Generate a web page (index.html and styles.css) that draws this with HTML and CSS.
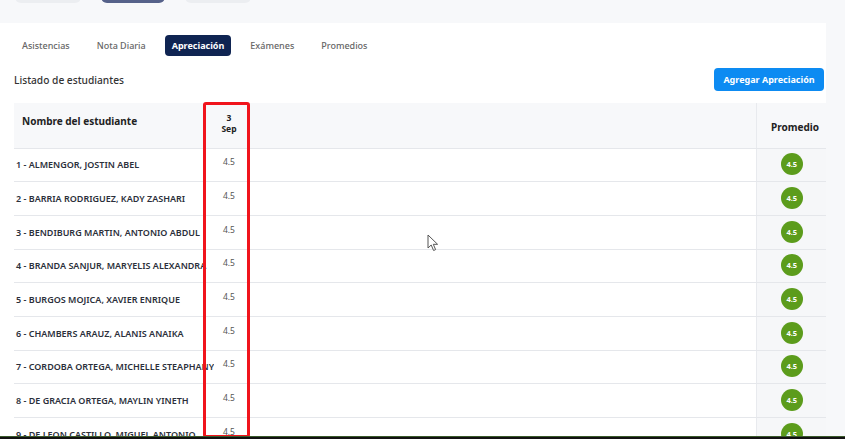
FILE: index.html
```html
<!DOCTYPE html>
<html lang="es">

<head>
    <meta charset="UTF-8">
    <meta name="viewport" content="width=device-width, initial-scale=1.0">
    <title>Apreciación</title>
    <link rel="stylesheet" href="styles.css">
</head>

<body>

    <div class="topbar">
        <span class="top-btn"></span>
        <span class="top-btn dark"></span>
        <span class="top-btn"></span>
    </div>

    <div class="card">
        <div class="tabs">
            <span class="tab">Asistencias</span>
            <span class="tab">Nota Diaria</span>
            <span class="tab active">Apreciación</span>
            <span class="tab">Exámenes</span>
            <span class="tab">Promedios</span>
        </div>

        <div class="list-head">
            <h3>Listado de estudiantes</h3>
            <button type="button">Agregar Apreciación</button>
        </div>

        <div class="table-wrap">
            <table class="grades">
                <thead>
                    <tr>
                        <th class="name-col">Nombre del estudiante</th>
                        <th class="date-col">3<br>Sep</th>
                        <th class="fill-col"></th>
                        <th class="avg-col">Promedio</th>
                    </tr>
                </thead>
                <tbody id="rows"></tbody>
            </table>
            <div class="highlight"></div>
            <svg class="cursor" width="12" height="18" viewBox="0 0 12 18">
                <path d="M1 1 L1 14 L4.2 11 L6.6 16.5 L8.6 15.6 L6.3 10.3 L10.6 10.3 Z" fill="#fff" stroke="#555" stroke-width="1" />
            </svg>
        </div>
    </div>

    <div class="bottom-bar"></div>

    <script>
        var students = [
            "ALMENGOR, JOSTIN ABEL",
            "BARRIA RODRIGUEZ, KADY ZASHARI",
            "BENDIBURG MARTIN, ANTONIO ABDUL",
            "BRANDA SANJUR, MARYELIS ALEXANDRA",
            "BURGOS MOJICA, XAVIER ENRIQUE",
            "CHAMBERS ARAUZ, ALANIS ANAIKA",
            "CORDOBA ORTEGA, MICHELLE STEAPHANY",
            "DE GRACIA ORTEGA, MAYLIN YINETH",
            "DE LEON CASTILLO, MIGUEL ANTONIO"
        ];

        var rows = document.getElementById("rows");
        students.forEach(function (name, i) {
            rows.innerHTML += "<tr>" +
                "<td class='name-col'><div class='name'>" + (i + 1) + " - " + name + "</div></td>" +
                "<td class='date-col score'>4.5</td>" +
                "<td class='fill-col'></td>" +
                "<td class='avg-col'><span class='badge'>4.5</span></td>" +
                "</tr>";
        });
    </script>

</body>

</html>
```

FILE: styles.css
```css
body {
    margin: 0;
    padding: 0;
    background-color: #f7f8fa;
    font-family: "Noto Sans", "Open Sans", sans-serif;
    color: #333;
    height: 439px;
    overflow: hidden;
}

.topbar {
    height: 23px;
    display: flex;
    align-items: flex-end;
    gap: 20px;
    padding-left: 15px;
}

.top-btn {
    display: block;
    width: 66px;
    height: 20px;
    margin-bottom: 20px;
    background-color: #eceef1;
    border-radius: 0 0 6px 6px;
}

.top-btn.dark {
    background-color: #56628a;
    width: 64px;
}

.card {
    background-color: #fff;
    width: 826px;
    height: 416px;
    box-sizing: border-box;
    padding: 12px 0 0 14px;
}

.tabs {
    display: flex;
    align-items: center;
    height: 21px;
    padding-left: 8px;
}

.tab {
    font-size: 9px;
    font-weight: 500;
    color: #666;
    margin-right: 27px;
    white-space: nowrap;
}

.tab.active {
    background-color: #0f2452;
    color: #fff;
    font-weight: 700;
    padding: 4px 7px;
    border-radius: 4px;
    margin-left: -8px;
    margin-right: 19px;
    line-height: 13px;
}

.list-head {
    display: flex;
    justify-content: space-between;
    align-items: center;
    margin-top: 12px;
    padding-right: 2px;
    height: 23px;
}

.list-head h3 {
    margin: 0;
    font-size: 10.2px;
    font-weight: 500;
    color: #333;
}

.list-head button {
    background-color: #0d8bf2;
    color: #fff;
    border: none;
    border-radius: 4px;
    font-family: inherit;
    font-size: 9px;
    font-weight: 700;
    height: 23px;
    width: 110px;
    padding: 0;
}

.table-wrap {
    position: relative;
    margin-top: 12px;
}

.grades {
    border-collapse: collapse;
    width: 812px;
    table-layout: fixed;
}

.grades th,
.grades td {
    box-sizing: border-box;
    padding: 0;
}

.grades th {
    background-color: #f7f8fa;
    height: 45px;
    font-size: 10px;
    font-weight: 700;
    color: #222;
    text-align: left;
    border-bottom: 1px solid #e5e7eb;
}

.grades th.name-col {
    padding: 0 0 8px 8px;
}

.grades th.date-col {
    font-size: 8.5px;
    line-height: 11px;
    text-align: center;
    padding-bottom: 4px;
}

.grades th.avg-col {
    text-align: right;
    padding: 4px 7px 0 0;
}

.grades td {
    height: 33.7px;
    border-bottom: 1px solid #e5e7eb;
}

.name-col {
    width: 192px;
}

.date-col {
    width: 46px;
}

.avg-col {
    width: 70px;
    background-color: #f6f7f9;
    text-align: center;
    border-left: 1px solid #e8eaee;
}

.name {
    font-size: 9px;
    font-weight: 600;
    color: #2b2f3a;
    white-space: nowrap;
    overflow: hidden;
    width: 198px;
    padding-left: 2px;
}

.score {
    font-size: 8.5px;
    color: #555;
    text-align: center;
    vertical-align: middle;
    padding-bottom: 6px !important;
}

.badge {
    display: inline-flex;
    align-items: center;
    justify-content: center;
    width: 22px;
    height: 22px;
    border-radius: 50%;
    background-color: #5c9c1c;
    color: #fff;
    font-size: 7.5px;
    font-weight: 700;
    margin-bottom: 4px;
    margin-left: 1px;
}

.highlight {
    position: absolute;
    left: 189px;
    top: -1px;
    width: 41px;
    height: 330px;
    border: 3px solid #f0141c;
    border-radius: 3px;
}

.cursor {
    position: absolute;
    left: 413px;
    top: 131px;
}

.bottom-bar {
    position: fixed;
    left: 0;
    right: 0;
    bottom: 0;
    height: 2px;
    background-color: #111;
    border-top: 1px solid #3a5a2a;
}
```
